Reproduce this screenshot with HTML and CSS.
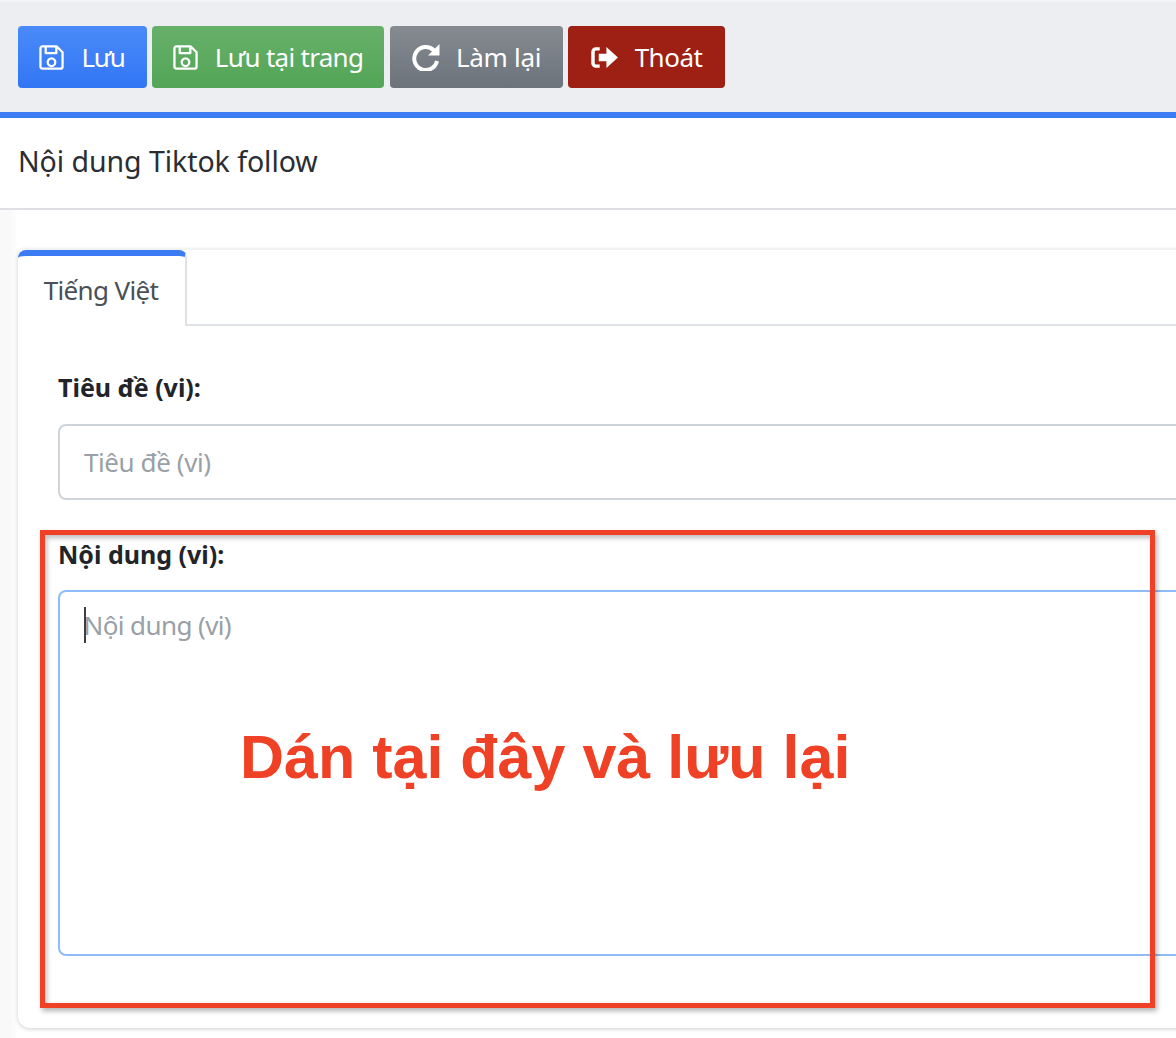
FILE: index.html
```html
<!DOCTYPE html>
<html lang="vi">
<head>
<meta charset="utf-8">
<title>Nội dung Tiktok follow</title>
<link rel="stylesheet" href="styles.css">
</head>
<body>
<div class="page">
  <div class="toolbar">
    <button class="btn btn-blue">
      <svg class="ico" viewBox="0 0 26 26"><path d="M3.5 1.5h15l6 6v15a2 2 0 0 1-2 2h-19a2 2 0 0 1-2-2v-19a2 2 0 0 1 2-2z M7 1.500v7h11v-7 M13 14a4 4 0 1 0 .01 0z" fill="none" stroke="#fff" stroke-width="2.4" stroke-linejoin="round"/></svg>
      <span>Lưu</span>
    </button>
    <button class="btn btn-green">
      <svg class="ico" viewBox="0 0 26 26"><path d="M3.5 1.5h15l6 6v15a2 2 0 0 1-2 2h-19a2 2 0 0 1-2-2v-19a2 2 0 0 1 2-2z M7 1.500v7h11v-7 M13 14a4 4 0 1 0 .01 0z" fill="none" stroke="#fff" stroke-width="2.4" stroke-linejoin="round"/></svg>
      <span>Lưu tại trang</span>
    </button>
    <button class="btn btn-gray">
      <svg class="ico ico-redo" viewBox="0 0 28 28"><path d="M22 7.500A11.500 11.500 0 1 0 25 18" fill="none" stroke="#fff" stroke-width="4"/><path d="M27.500 1V12.500H16z" fill="#fff"/></svg>
      <span>Làm lại</span>
    </button>
    <button class="btn btn-red">
      <svg class="ico ico-exit" viewBox="0 0 28 24"><path d="M9 3H5a3 3 0 0 0-3 3v12a3 3 0 0 0 3 3h4" fill="none" stroke="#fff" stroke-width="3.600"/><path d="M8 8h8V1l12 11-12 11v-7H8z" fill="#fff"/></svg>
      <span>Thoát</span>
    </button>
  </div>
  <div class="heading">Nội dung Tiktok follow</div>
  <div class="content">
    <div class="card">
      <div class="tabs">
        <div class="tab">Tiếng Việt</div>
      </div>
      <form class="form">
        <div class="group">
          <label class="label" for="title">Tiêu đề (vi):</label>
          <input class="field" id="title" type="text" placeholder="Tiêu đề (vi)">
        </div>
        <div class="group">
          <label class="label" for="body">Nội dung (vi):</label>
          <div class="area-wrap">
            <textarea class="field area" id="body" placeholder="Nội dung (vi)"></textarea>
            <span class="caret"></span>
          </div>
        </div>
      </form>
    </div>
  </div>
  <div class="callout"><span class="callout-text">Dán tại đây và lưu lại</span></div>
</div>
</body>
</html>
```

FILE: styles.css
```css
* { box-sizing: border-box; }
html, body { margin: 0; padding: 0; height: 100%; overflow: hidden; }
body { background: linear-gradient(90deg, #f9f9f9 0, #f9f9f9 10px, #fff 18px); font-family: "Noto Sans", "Open Sans", sans-serif; color: #212529; }
.page { position: relative; width: 1176px; height: 1038px; overflow: hidden; }

.toolbar {
  display: flex; gap: 5px; height: 118px; padding: 24px 18px 0;
  background: #eceef2; border-top: 2px solid #f3f4f6; border-bottom: 6px solid #3b7cf4;
}
.btn {
  display: flex; align-items: center; justify-content: center; gap: 17px; height: 62px; padding: 0;
  border: 0; border-radius: 4px; color: #fff; font: 26px/1 "Noto Sans", sans-serif; letter-spacing: -.7px;
}
.btn-blue { width: 129px; padding-right: 1px; background: linear-gradient(#4a8af8, #3276f5); letter-spacing: -1.4px; }
.btn-green { width: 232px; background: linear-gradient(#67b06a, #53a557); }
.btn-gray { width: 173px; margin-left: 1px; gap: 16px; letter-spacing: -.3px; background: linear-gradient(#868b92, #6c737a); }
.btn-red { width: 157px; letter-spacing: -.5px; background: #9e1f13; }
.ico { width: 25px; height: 25px; flex: none; }
.ico-redo { width: 28px; height: 28px; }
.ico-exit { width: 27px; height: 23px; }

.heading {
  height: 92px; padding: 0 0 4px 18px; display: flex; align-items: center;
  background: #fff; border-bottom: 2px solid #dee0e3; font-size: 28.5px; letter-spacing: -.05px; color: #2a2e33;
}
.content { padding: 39px 0 0 18px; width: 1500px; }
.card {
  background: #fff; border-radius: 6px 0 12px 12px; box-shadow: 0 1px 4px rgba(0,0,0,.2);
  height: 779px; border-top: 1px solid #f0f1f2;
}
.tabs { display: flex; height: 76px; border-bottom: 2px solid #dee2e6; }
.tab {
  width: 169px; height: 76px; flex: none; display: flex; align-items: center; justify-content: center;
  background: #fff; border-top: 6px solid #3b7cf4; border-right: 2px solid #dee2e6; border-radius: 8px 8px 0 0;
  padding: 0 1px 2px 0; font-size: 26px; letter-spacing: -.65px; color: #495057;
}
.form { padding: 47px 0 0 40px; display: flex; flex-direction: column; gap: 40px; }
.group { display: flex; flex-direction: column; gap: 23px; }
.group + .group { gap: 22px; margin-top: 0; }
.label { height: 28px; line-height: 28px; font-size: 25px; font-weight: 700; color: #212529; }
.field {
  display: block; width: 1400px; height: 76px; padding: 0 24px; background: #fff;
  border: 2px solid #ced4da; border-radius: 8px; outline: 0;
  font: 26px "Noto Sans", sans-serif; letter-spacing: -.42px; color: #495057;
}
.field::placeholder { color: #99a0a7; opacity: 1; }
.area-wrap { position: relative; }
.area { height: 366px; padding: 13px 24px 0 23.500px; border-color: #8fbcf8; resize: none; line-height: 40px; letter-spacing: -.6px; }
.caret { position: absolute; left: 26px; top: 17px; width: 2px; height: 36px; background: #3a4046; }

.callout {
  position: absolute; left: 40px; top: 530px; width: 1115px; height: 478px;
  border: 5px solid #ef4126; box-shadow: 2px 3px 5px rgba(0,0,0,.3), inset 2px 3px 5px rgba(0,0,0,.25);
}
.callout-text {
  position: absolute; left: 195px; top: 186px; white-space: nowrap;
  font: 700 61px/72px "Liberation Sans", Arial, sans-serif; color: #ef4126;
}
```
